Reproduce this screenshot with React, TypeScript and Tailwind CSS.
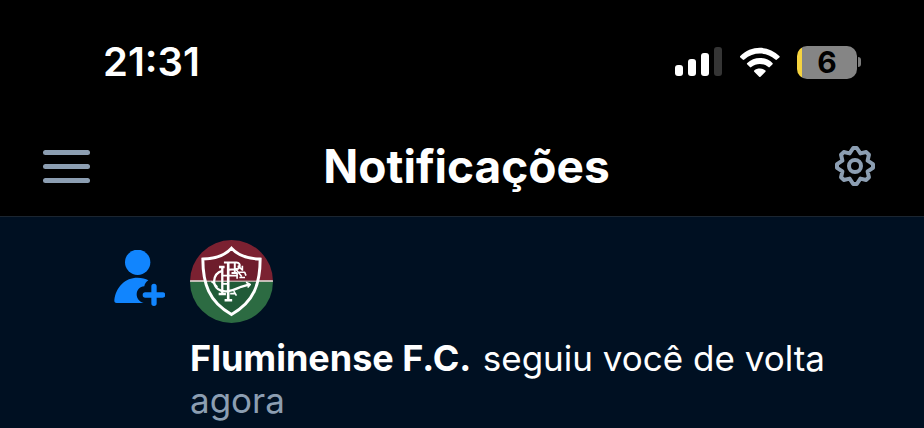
const barHeights = ["h-[11px]", "h-[17px]", "h-[23px]"];

function Signal() {
  return (
    <div className="flex h-[30px] items-end gap-[5px] pb-px" role="img" aria-label="Sinal">
      {barHeights.map((height) => (
        <span key={height} className={`w-2 rounded-[3px] bg-white ${height}`} />
      ))}
      <span className="h-[29px] w-2 rounded-[3px] bg-[#353535]" />
    </div>
  );
}

function Wifi() {
  return (
    <svg viewBox="236 46 122 94" className="h-[31px] w-[41px]" role="img" aria-label="Wi-Fi" fill="#fff">
      <path d="M238 74C272 40 324 40 358 74Q359 76 357 78L349 85Q347 86 345 84C317 60 279 60 251 84Q249 86 247 85L239 78Q237 76 238 74Z" />
      <path d="M259 95C281 74 315 74 337 95Q338 97 336 99L328 107Q326 109 324 107C309 94 287 94 272 107Q270 109 268 107L260 99Q258 97 259 95Z" />
      <path d="M281 117C290 109 306 109 315 117Q317 119 315 121L300 136Q298 138 296 136L281 121Q279 119 281 117Z" />
    </svg>
  );
}

function Battery() {
  return (
    <div className="flex items-center gap-px">
      <div className="flex h-[33px] w-[60px] items-center justify-center rounded-[10px] bg-[linear-gradient(to_right,#f5d33f_5px,#858585_5px)] text-3xl font-bold text-black">
        6
      </div>
      <span className="h-[10px] w-[3px] rounded-r-full bg-[#7c7c7c]" />
    </div>
  );
}

function Gear() {
  return (
    <svg viewBox="0 0 24 24" className="size-12" fill="none" stroke="currentColor" strokeWidth="2" strokeLinejoin="round" aria-hidden="true">
      <path d="M11.1 3h1.8l1.8 2.7 2.92-.67 1.35 1.35-.67 2.92L21 11.1v1.8l-2.7 1.8.67 2.92-1.35 1.35-2.92-.67L12.9 21h-1.8l-1.8-2.7-2.92.67-1.35-1.35.67-2.92L3 12.9v-1.8l2.7-1.8-.67-2.92 1.35-1.35 2.92.67Z" />
      <circle cx="12" cy="12" r="3" />
    </svg>
  );
}

function PersonPlus() {
  return (
    <svg viewBox="42 45 153 168" className="mt-[10px] h-14 w-[51px] shrink-0" fill="#1185fe" role="img" aria-label="Novo seguidor">
      <circle cx="113" cy="82" r="38" />
      <path d="M112 128C126 128 137 131 145 136C138 140 134 147 133 154C119 155 110 166 110 178C110 190 118 201 131 204H50Q42 204 43 195C48 155 76 128 112 128Z" />
      <path d="M162 154V205M136 180H188" fill="none" stroke="#1185fe" strokeWidth="16" strokeLinecap="round" />
    </svg>
  );
}

function Crest() {
  return (
    <svg viewBox="21 23 252 252" className="size-[83px]" role="img" aria-label="Escudo do Fluminense F.C.">
      <clipPath id="disc">
        <circle cx="147" cy="149" r="126" />
      </clipPath>
      <g clipPath="url(#disc)">
        <path fill="#7b2131" d="M21 23h252v124H21z" />
        <path fill="#2c6b42" d="M21 147h252v128H21z" />
        <path fill="#f4dfe0" d="M21 145h252v5H21z" />
      </g>
      <path d="M147 48C128 69 99 80 60 81C60 155 78 211 147 249C216 211 234 155 234 81C195 80 166 69 147 48Z" fill="#6e1d2c" />
      <path d="M66 148C73 195 99 223 147 249C195 223 221 195 228 148Z" fill="#215b38" />
      <path d="M66 148H228" stroke="#f4dfe0" strokeWidth="3" />
      <path d="M147 48C128 69 99 80 60 81C60 155 78 211 147 249C216 211 234 155 234 81C195 80 166 69 147 48Z" fill="none" stroke="#fff" strokeWidth="9" strokeLinejoin="miter" />
      <g fill="none" stroke="#fff" strokeLinejoin="round">
        <path d="M119 117C103 121 95 134 94 149C95 169 112 181 134 179C152 177 164 170 176 165L202 158" strokeWidth="7" />
        <path d="M86 149C94 153 99 160 104 166M191 151L204 158L196 167" strokeWidth="5" />
        <path d="M119 105V186M108 187H130M109 105H126" strokeWidth="7" />
        <path d="M137 91V202M126 206H149" strokeWidth="8" />
        <path d="M124 91H162C179 93 173 113 157 112L137 113M157 91V123M147 123H164" strokeWidth="6" />
        <path d="M159 110L178 134M171 137H188M166 101L178 112M180 101V116M170 121H187L191 131" strokeWidth="5" />
        <path d="M119 131H164M164 122V141M119 156H134M143 186H160M154 178L162 192" strokeWidth="5" />
      </g>
    </svg>
  );
}

export default function App() {
  return (
    <div className="min-h-screen bg-[#001022] font-['Inter','Liberation_Sans',sans-serif] text-white">
      <header className="border-b border-[#1b2530] bg-black">
        <div className="flex h-[124px] items-center justify-between pr-[63px] pl-[103px]">
          <time className="text-[40px] font-semibold">21:31</time>
          <div className="flex items-center gap-[17px]">
            <Signal />
            <Wifi />
            <Battery />
          </div>
        </div>
        <div className="grid h-[92px] grid-cols-[auto_1fr_auto] items-start pt-[18px] pr-[45px] pl-[43px]">
          <button type="button" aria-label="Menu" className="flex h-12 w-[47px] flex-col justify-center gap-[9px] text-[#8c9eb2]">
            <span className="h-[5px] w-full rounded-full bg-current" />
            <span className="h-[5px] w-full rounded-full bg-current" />
            <span className="h-[5px] w-full rounded-full bg-current" />
          </button>
          <h1 className="pl-3 text-center text-[46px] leading-12 font-bold">Notificações</h1>
          <button type="button" aria-label="Configurações" className="text-[#8c9eb2]">
            <Gear />
          </button>
        </div>
      </header>
      <main>
        <article className="flex gap-[25px] pt-[23px] pr-6 pl-[114px]">
          <PersonPlus />
          <div>
            <Crest />
            <p className="mt-[14px] text-[35px] leading-[42px]">
              <strong className="mr-1 text-[36px] font-bold">Fluminense F.C. </strong>
              seguiu você de volta
            </p>
            <time className="block text-[35px] leading-[42px] text-[#8c9eb2]">agora</time>
          </div>
        </article>
      </main>
    </div>
  );
}
